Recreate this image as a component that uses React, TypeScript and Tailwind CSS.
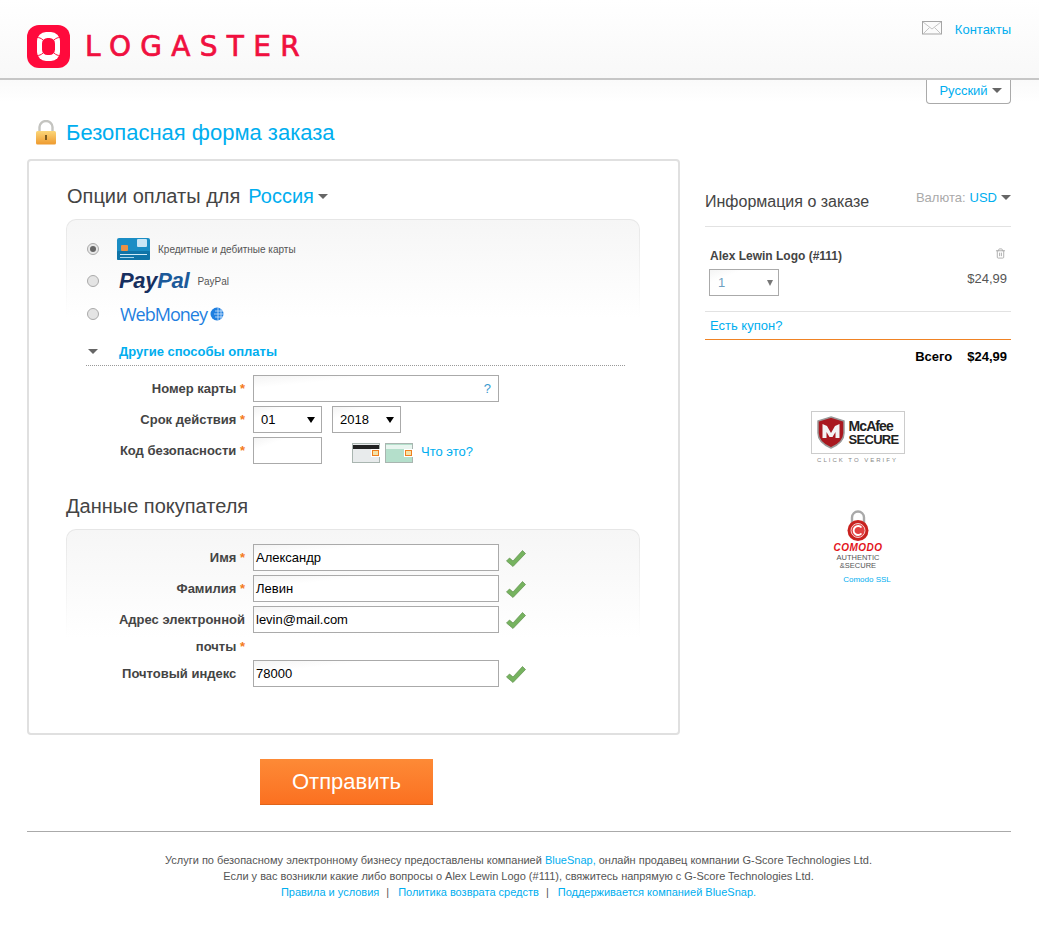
import { ReactNode } from 'react';
import { Trash2 } from 'lucide-react';

const Caret = ({ className = '' }: { className?: string }) => (
  <span className={`inline-block w-0 h-0 border-x-[5px] border-x-transparent border-t-[5px] border-t-[#666] ${className}`} />
);

const Logo = () => (
  <svg width="43" height="43" viewBox="0 0 43 43">
    <rect width="43" height="43" rx="12" fill="#ff0a3c" />
    <rect x="10" y="7" width="23" height="29" rx="9" fill="#fff" />
    <rect x="15" y="13" width="13" height="17" rx="5.500" fill="#ff0a3c" />
    <path d="M10 12.500c2 0 4 .5 6 2.500M33 12.500c-2 0-4 .5-6 2.500M10 30.500c2 0 4-.5 6-2.500M33 30.500c-2 0-4-.5-6-2.500" stroke="#ff0a3c" strokeWidth="1" fill="none" />
  </svg>
);

const LockIcon = () => (
  <svg width="20" height="25" viewBox="0 0 20 25">
    <defs>
      <linearGradient id="lockBody" x1="0" y1="0" x2="0" y2="1">
        <stop offset="0" stopColor="#fbd679" />
        <stop offset="1" stopColor="#ee9a2e" />
      </linearGradient>
    </defs>
    <path d="M3.500 12V7a6.500 6 0 0 1 13 0V12" fill="none" stroke="#c4c4c0" strokeWidth="2.400" />
    <rect x="0" y="11" width="20" height="13.500" rx="1.500" fill="url(#lockBody)" />
    <rect x="9" y="15" width="2" height="5" fill="#7a5a20" />
  </svg>
);

const Envelope = () => (
  <svg width="20" height="14" viewBox="0 0 20 14" fill="none" stroke="#a5a5a5">
    <rect x="0.500" y="0.500" width="19" height="12.500" fill="#fbfbfb" />
    <path d="M1 1l9 7 9-7M1 13l6.500-6.500M19 13l-6.500-6.500" stroke="#c4c4c4" />
  </svg>
);

const Check = () => (
  <svg width="20" height="17" viewBox="0 0 20 17">
    <path d="M0.500 11l3-3 3.500 3L16.500 0.500l3 3L7 16.500z" fill="#76b35f" stroke="#5e8f4c" strokeWidth="0.700" />
  </svg>
);

const CardIcon = () => (
  <svg width="33" height="22" viewBox="0 0 33 22">
    <rect width="33" height="22" rx="2" fill="#1a8dc4" />
    <rect y="13" width="33" height="9" rx="1" fill="#0f74a8" />
    <rect x="4" y="7" width="7" height="6" rx="1" fill="#ec9143" />
    <rect x="20" y="1" width="10" height="8" rx="1" fill="#c9e6f5" />
    <rect x="3" y="16" width="27" height="1" fill="#d0ecf8" />
    <rect x="3" y="19" width="14" height="1" fill="#a8d6ec" />
  </svg>
);

const Globe = () => (
  <svg width="14" height="14" viewBox="0 0 14 14">
    <circle cx="7" cy="7" r="6.500" fill="#1f7fe0" />
    <path d="M5 4h8M4 7h10M5 10h8M8 1v12M11 2v10" stroke="#cfe4fb" strokeWidth="0.800" />
  </svg>
);

const CvvCard = ({ bg, stripe }: { bg: string; stripe: string }) => (
  <svg width="28" height="20" viewBox="0 0 28 20">
    <rect x="0.500" y="0.500" width="27" height="19" fill={bg} stroke="#a9b5b0" />
    <rect x="1" y="2" width="26" height="4" fill={stripe} />
    <rect x="19" y="6" width="9" height="8" fill="#fff" />
    <rect x="20.500" y="7.500" width="6" height="5" fill="#f3e2a8" stroke="#f0801f" />
  </svg>
);

const McAfee = () => (
  <div className="flex flex-col items-center">
    <div className="w-[94px] h-[43px] border border-[#cccccc] flex items-center gap-[4px] pl-[5px]">
      <svg width="28" height="33" viewBox="0 0 28 33">
        <path d="M14 1l13 4v12c0 8-6 12-13 15C7 29 1 25 1 17V5z" fill="#a9181f" stroke="#9a9a9a" strokeWidth="1.500" />
        <path d="M5.500 8l4.500 2 4 7 4-7 4.500-2v14h-4v-6l-3 5h-3l-3-5v6h-4z" fill="#f3f3f3" />
      </svg>
      <div className="flex flex-col font-bold text-[#222]">
        <span className="text-[14px] leading-[14px] tracking-[-0.900px]">McAfee</span>
        <span className="text-[13px] leading-[13px] tracking-[-0.700px]">SECURE</span>
      </div>
    </div>
    <span className="mt-[2px] text-[6px] leading-[8px] tracking-[2px] text-[#888]">CLICK TO VERIFY</span>
  </div>
);

const Comodo = () => (
  <div className="flex flex-col items-center">
    <svg width="22" height="32" viewBox="0 0 22 32">
      <path d="M5 14V7.500a6 6 0 0 1 12 0V14" fill="none" stroke="#a9a9a9" strokeWidth="2.400" />
      <circle cx="11" cy="20.500" r="10.500" fill="#c9221f" />
      <circle cx="11" cy="20.500" r="7" fill="#e24040" stroke="#f1d0d0" />
      <path d="M14.500 17.500a4.500 4.500 0 1 0 0 6" fill="none" stroke="#fff" strokeWidth="1.800" />
    </svg>
    <span className="mt-[1px] text-[10px] leading-[10px] font-bold italic tracking-[0.500px] text-[#e3141c]">COMODO</span>
    <span className="mt-[1px] text-[7.500px] leading-[8px] text-[#555]">AUTHENTIC</span>
    <span className="text-[7.500px] leading-[8px] text-[#555]">&amp;SECURE</span>
  </div>
);

const Star = ({ hidden = false }: { hidden?: boolean }) => (
  <span className={hidden ? 'text-transparent' : 'text-[#f47b20]'}> *</span>
);

const Row = ({ label, children, tall = false }: { label: ReactNode; children: ReactNode; tall?: boolean }) => (
  <div className={`flex items-start ${tall ? '' : 'mb-[4px]'}`}>
    <div className="ml-[51px] w-[128px] text-right text-[13px] leading-[27px] font-bold text-[#444]">{label}</div>
    <div className="ml-[8px] flex items-center">{children}</div>
  </div>
);

const inputCls =
  'h-[27px] border border-[#aaaaaa] bg-gradient-to-br from-[#f4f4f4] to-white to-[25%] text-[13px] leading-[25px]';

const DateSelect = ({ value }: { value: string }) => (
  <div className={`${inputCls} w-[69px] px-[7px] flex items-center justify-between text-black`}>
    <span>{value}</span>
    <span className="w-0 h-0 border-x-[4px] border-x-transparent border-t-[6px] border-t-black mr-[-1px]" />
  </div>
);

const TextField = ({ value }: { value: string }) => (
  <>
    <div className={`${inputCls} w-[246px] px-[2px] text-black`}>{value}</div>
    <span className="ml-[7px] mt-[1px]"><Check /></span>
  </>
);

const Panel = ({ h, fade, children }: { h: string; fade: string; children: ReactNode }) => (
  <div className={`w-[574px] ${h} rounded-t-[10px] bg-gradient-to-b from-[#e6e6e6] to-white ${fade} p-[1px] pb-0`}>
    <div className={`h-full rounded-t-[9px] bg-gradient-to-b from-[#f6f6f6] to-white ${fade}`}>{children}</div>
  </div>
);

export default function App() {
  return (
    <div className="w-[1039px] h-[930px] bg-white font-['Liberation_Sans',Arial,sans-serif] text-[#444] overflow-hidden">
      {/* Header */}
      <div className="h-[80px] bg-gradient-to-b from-white to-[#f8f8f8] border-b-[2px] border-[#c6c6c6] pl-[27px] pr-[28px] flex justify-between shadow-[0_1px_2px_#e4e4e4]">
        <div className="flex items-center gap-[15px] pt-[15px] h-[78px]">
          <Logo />
          <span className="font-['DejaVu_Sans',sans-serif] text-[28px] leading-none tracking-[9.300px] [-webkit-text-stroke:0.7px_#f0103f] text-[#f0103f]">LOGASTER</span>
        </div>
        <div className="flex items-start gap-[13px] pt-[21px]">
          <Envelope />
          <a className="text-[13px] leading-[17px] text-[#00aeef]">Контакты</a>
        </div>
      </div>

      <div className="h-[22px] bg-gradient-to-b from-[#fafafa] to-white px-[28px] flex justify-end">
        <div className="w-[85px] h-[24px] pl-[4px] pb-[2px] border border-t-0 border-[#aaaaaa] rounded-b-[4px] bg-white flex items-center justify-center gap-[4px] text-[13px] text-[#00aeef]">
          Русский <Caret />
        </div>
      </div>

      <div className="px-[28px]">
        <div className="flex items-center gap-[10px] mt-[16px] h-[28px] pl-[8px]">
          <LockIcon />
          <h1 className="text-[22px] leading-[28px] text-[#00aeef] pt-[2px]">Безопасная форма заказа</h1>
        </div>

        <div className="flex mt-[13px] ml-[-1px]">
          {/* Form box */}
          <div className="w-[653px] h-[576px] border-2 border-[#e0e0e0] rounded-[4px] px-[37px] pt-[20px]">
            <div className="flex items-center h-[30px] text-[20px] text-[#444]">
              <span className="ml-[1px]">Опции оплаты для</span>
              <a className="ml-[8px] text-[#00aeef]">Россия</a>
              <Caret className="ml-[4px]" />
            </div>

            {/* Payment options */}
            <div className="mt-[8px]">
              <Panel h="h-[116px]" fade="to-[85%]">
                <div className="pt-[18px] pl-[20px]">
                  <div className="flex items-center h-[22px]">
                    <span className="w-[12px] h-[12px] rounded-full border border-[#aaa] bg-[#e8e8e8] flex items-center justify-center">
                      <span className="w-[6px] h-[6px] rounded-full bg-[#666]" />
                    </span>
                    <span className="ml-[18px]"><CardIcon /></span>
                    <span className="ml-[8px] text-[10px] text-[#555]">Кредитные и дебитные карты</span>
                  </div>
                  <div className="flex items-center h-[22px] mt-[10px]">
                    <span className="w-[12px] h-[12px] rounded-full border border-[#aaa] bg-[#e4e4e4]" />
                    <span className="ml-[20px] font-bold italic text-[22px] leading-none tracking-[-0.300px] text-[#172f5f]">Pay<span className="text-[#1c5a9a]">Pal</span></span>
                    <span className="ml-[8px] text-[10px] text-[#555]">PayPal</span>
                  </div>
                  <div className="flex items-center h-[22px] mt-[11px]">
                    <span className="w-[12px] h-[12px] rounded-full border border-[#aaa] bg-[#e4e4e4]" />
                    <span className="ml-[21px] font-['Open_Sans',sans-serif] font-medium text-[18px] leading-none tracking-[-1px] text-[#1f7fe0]">WebMoney</span>
                    <span className="ml-[3px]"><Globe /></span>
                  </div>
                </div>
              </Panel>
            </div>

            <div className="ml-[20px] w-[539px] h-[31px] pt-[3px] border-b border-dotted border-[#999] flex items-center">
              <Caret className="ml-[2px]" />
              <a className="ml-[21px] text-[13px] font-bold text-[#00aeef]">Другие способы оплаты</a>
            </div>

            <div className="mt-[9px]">
              <Row label={<>Номер карты<Star /></>}>
                <div className={`${inputCls} w-[246px] flex items-center justify-end px-[7px] text-[#3b9ad0]`}>?</div>
              </Row>
              <Row label={<>Срок действия<Star /></>}>
                <DateSelect value="01" />
                <span className="ml-[10px]"><DateSelect value="2018" /></span>
              </Row>
              <Row label={<>Код безопасности<Star /></>}>
                <div className={`${inputCls} w-[69px]`} />
                <span className="ml-[30px] mt-[4px] flex items-center gap-[5px]">
                  <CvvCard bg="#e8ebec" stripe="#222" />
                  <CvvCard bg="#b4dfcb" stripe="#e8f5ef" />
                </span>
                <a className="ml-[8px] mt-[3px] text-[13px] text-[#00aeef]">Что это?</a>
              </Row>
            </div>

            <h2 className="mt-[27px] h-[30px] text-[20px] leading-[30px] text-[#444]">Данные покупателя</h2>

            <div className="mt-[8px]">
              <Panel h="h-[121px]" fade="to-[90%]">
                <div className="pt-[14px] ml-[-1px]">
                  <Row label={<>Имя<Star /></>}><TextField value="Александр" /></Row>
                  <Row label={<>Фамилия<Star /></>}><TextField value="Левин" /></Row>
                  <Row tall label={<>Адрес электронной<br />почты<Star /></>}><TextField value="levin@mail.com" /></Row>
                  <Row label={<>Почтовый индекс<Star hidden /></>}><TextField value="78000" /></Row>
                </div>
              </Panel>
            </div>
          </div>

          {/* Order info */}
          <div className="w-[306px] ml-[25px] pt-[27px]">
            <div className="flex justify-between h-[40px]">
              <span className="text-[16px] leading-[32px] text-[#444]">Информация о заказе</span>
              <span className="text-[13px] leading-[24px] text-[#aaa] flex items-start">
                Валюта:<a className="ml-[4px] text-[#00aeef]">USD</a>
                <Caret className="ml-[4px] mt-[9px]" />
              </span>
            </div>
            <div className="border-t border-[#e2e2e2] h-[85px] px-[4px] pt-[21px] relative">
              <div className="text-[12px] font-bold text-[#444] leading-[16px] pl-[1px]">Alex Lewin Logo (#111)</div>
              <div className="mt-[5px] w-[70px] h-[27px] border border-[#aaaaaa] bg-gradient-to-br from-[#f4f4f4] to-white to-[25%] flex items-center justify-between pl-[8px] pr-[5px] text-[13px] text-[#6f9fc0]">
                1
                <span className="w-0 h-0 border-x-[3.500px] border-x-transparent border-t-[6px] border-t-[#777]" />
              </div>
              <Trash2 size={11} className="absolute right-[5px] top-[21px] text-[#aaa]" />
              <div className="absolute right-[4px] top-[44px] text-[13px] leading-[16px] text-[#555]">$24,99</div>
            </div>
            <div className="border-t border-[#e2e2e2] h-[28px] px-[5px] text-[13px] leading-[27px] text-[#00aeef]">Есть купон?</div>
            <div className="border-t border-[#f08324] flex justify-end gap-[15px] px-[4px] pt-[8px] text-[13px] leading-[18px] font-bold text-black">
              <span>Всего</span>
              <span>$24,99</span>
            </div>
            <div className="mt-[45px] flex justify-center ml-[-1px]">
              <McAfee />
            </div>
            <div className="mt-[46px] flex justify-center">
              <Comodo />
            </div>
            <div className="mt-[5px] text-center text-[8px] leading-[10px] text-[#00aeef] ml-[18px]">Comodo SSL</div>
          </div>
        </div>

        {/* Submit */}
        <div className="mt-[24px] ml-[232px] w-[173px] h-[46px] bg-gradient-to-b from-[#fd8a36] to-[#fb7020] border-b border-[#e0641a] flex items-center justify-center text-[22px] text-white">
          Отправить
        </div>

        <footer className="mt-[26px] ml-[-1px] w-[984px] border-t border-[#aaaaaa] pt-[20px] pr-[1px] text-center text-[11px] leading-[16px] text-[#555]">
          <p>
            Услуги по безопасному электронному бизнесу предоставлены компанией <a className="text-[#00aeef]">BlueSnap,</a> онлайн продавец компании G-Score Technologies Ltd.
          </p>
          <p>Если у вас возникли какие либо вопросы о Alex Lewin Logo (#111), свяжитесь напрямую с G-Score Technologies Ltd.</p>
          <p>
            <a className="text-[#00aeef]">Правила и условия</a>
            <span className="mx-[7px]">|</span>
            <a className="text-[#00aeef] ml-[2px]">Политика возврата средств</a>
            <span className="mx-[7px]">|</span>
            <a className="text-[#00aeef] ml-[2px]">Поддерживается компанией BlueSnap.</a>
          </p>
        </footer>
      </div>
    </div>
  );
}
